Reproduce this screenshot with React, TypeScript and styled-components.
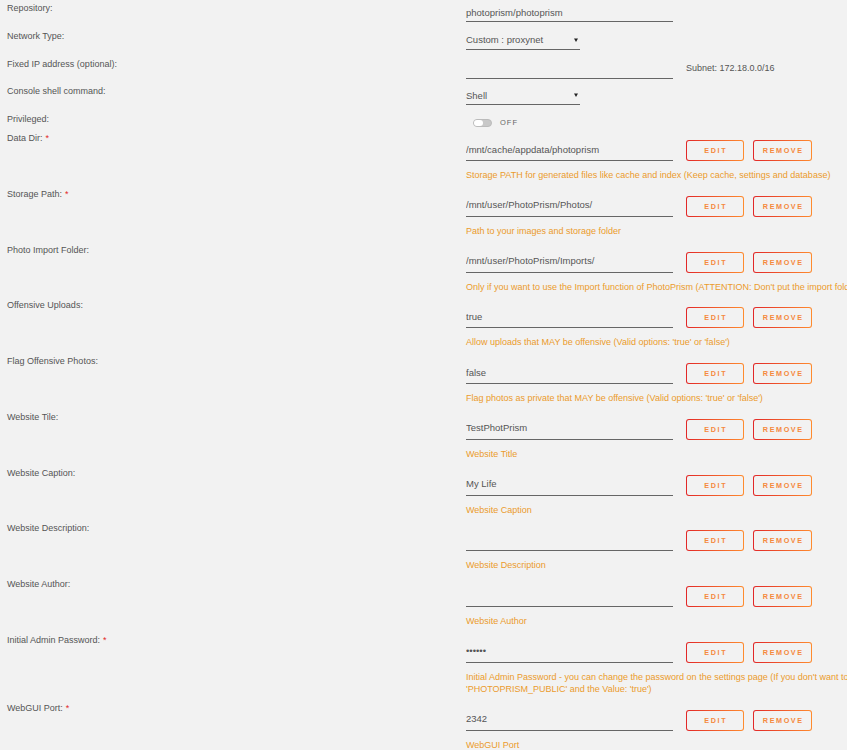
import React from 'react';
import styled, { createGlobalStyle } from 'styled-components';

const GlobalStyle = createGlobalStyle`
  html, body {
    margin: 0;
    padding: 0;
    background: #f2f2f2;
    overflow: hidden;
  }
  body {
    font-family: "Liberation Sans", Arial, sans-serif;
    color: #555;
  }
`;

const Form = styled.div`
  padding: 1px 0 0 7px;
`;

const Row = styled.div<{ $h: number }>`
  display: grid;
  grid-template-columns: 459px auto;
  height: ${(p) => p.$h}px;
`;

const ConfigRow = styled.div`
  display: grid;
  grid-template-columns: 459px auto;
  padding-bottom: 5.75px;
`;

const Label = styled.div`
  font-size: 9px;
  line-height: 14px;
  color: #555;
  white-space: nowrap;
`;

const Required = styled.span`
  color: #e22828;
  margin-left: 3px;
`;

const Value = styled.div`
  display: flex;
  align-items: flex-start;
  padding-top: 4px;
  align-self: start;
`;

const TextInput = styled.input<{ $w: number; $h?: number }>`
  box-sizing: content-box;
  width: ${(p) => p.$w}px;
  height: ${(p) => p.$h ?? 14}px;
  padding: 0 0 2px;
  margin: 0;
  border: 0;
  border-bottom: 1px solid #666;
  background: transparent;
  font: 9.5px "Liberation Sans", Arial, sans-serif;
  color: #555;
  outline: none;
`;

const Select = styled.div`
  box-sizing: content-box;
  width: 114px;
  height: 14px;
  padding-bottom: 2px;
  display: flex;
  align-items: center;
  justify-content: space-between;
  border-bottom: 1px solid #666;
  font-size: 9.5px;
  color: #555;
`;

const Caret = () => (
  <svg width="4" height="4" viewBox="0 0 4 4" style={{ marginRight: 2 }}>
    <path d="M0 0.5h4L2 4z" fill="#222" />
  </svg>
);

const Note = styled.span`
  margin-left: 13px;
  font-size: 9px;
  line-height: 14px;
  color: #555;
`;

const Switch = styled.div`
  display: flex;
  align-items: center;
  gap: 8px;
  margin-left: 7px;
  padding-top: 2px;
`;

const Track = styled.div`
  box-sizing: border-box;
  width: 19px;
  height: 8px;
  border-radius: 4px;
  background: #c8c8c8;
  border: 1px solid #bbb;
  display: flex;
  align-items: center;
`;

const Knob = styled.div`
  width: 9px;
  height: 6px;
  border-radius: 3px;
  background: #fff;
`;

const SwitchText = styled.span`
  font-size: 7.5px;
  letter-spacing: 1px;
  color: #666;
`;

const ConfigValue = styled.div`
  padding-top: 9px;
`;

const Controls = styled.div`
  display: flex;
  align-items: flex-end;
`;

const Button = styled.button<{ $w: number; $gap: number }>`
  box-sizing: border-box;
  width: ${(p) => p.$w}px;
  height: 21px;
  margin: 0 0 0 ${(p) => p.$gap}px;
  padding: 0 0 0 1.5px;
  border: 1.5px solid transparent;
  border-radius: 3px;
  background: linear-gradient(#f2f2f2, #f2f2f2) padding-box,
    linear-gradient(90deg, #e22828, #ff8c2f) border-box;
  font: bold 7.2px "Liberation Sans", Arial, sans-serif;
  letter-spacing: 1.6px;
  color: #f5893d;
  cursor: pointer;
`;

const Hint = styled.div`
  margin-top: 8px;
  font-size: 9px;
  line-height: 12px;
  color: #eb9b2c;
  white-space: nowrap;
`;

type Config = {
  label: string;
  value: string;
  hint: React.ReactNode;
  required?: boolean;
  secret?: boolean;
};

const configs: Config[] = [
  {
    label: 'Data Dir:',
    value: '/mnt/cache/appdata/photoprism',
    hint: 'Storage PATH for generated files like cache and index (Keep cache, settings and database)',
    required: true,
  },
  {
    label: 'Storage Path:',
    value: '/mnt/user/PhotoPrism/Photos/',
    hint: 'Path to your images and storage folder',
    required: true,
  },
  {
    label: 'Photo Import Folder:',
    value: '/mnt/user/PhotoPrism/Imports/',
    hint: "Only if you want to use the Import function of PhotoPrism (ATTENTION: Don't put the import folder inside the storage path)",
  },
  {
    label: 'Offensive Uploads:',
    value: 'true',
    hint: "Allow uploads that MAY be offensive (Valid options: 'true' or 'false')",
  },
  {
    label: 'Flag Offensive Photos:',
    value: 'false',
    hint: "Flag photos as private that MAY be offensive (Valid options: 'true' or 'false')",
  },
  { label: 'Website Tile:', value: 'TestPhotPrism', hint: 'Website Title' },
  { label: 'Website Caption:', value: 'My Life', hint: 'Website Caption' },
  { label: 'Website Description:', value: '', hint: 'Website Description' },
  { label: 'Website Author:', value: '', hint: 'Website Author' },
  {
    label: 'Initial Admin Password:',
    value: 'secret',
    secret: true,
    required: true,
    hint: (
      <>
        Initial Admin Password - you can change the password on the settings page (If you don't
        want to use a password, add a variable with the Key:
        <br />
        'PHOTOPRISM_PUBLIC' and the Value: 'true')
      </>
    ),
  },
  { label: 'WebGUI Port:', value: '2342', hint: 'WebGUI Port', required: true },
];

function ConfigField({ c }: { c: Config }) {
  return (
    <ConfigRow>
      <Label>
        {c.label}
        {c.required && <Required>*</Required>}
      </Label>
      <ConfigValue>
        <Controls>
          <TextInput
            $w={207}
            $h={18}
            type={c.secret ? 'password' : 'text'}
            defaultValue={c.value}
            readOnly
          />
          <Button $w={58} $gap={13}>EDIT</Button>
          <Button $w={59} $gap={9}>REMOVE</Button>
        </Controls>
        <Hint>{c.hint}</Hint>
      </ConfigValue>
    </ConfigRow>
  );
}

export default function App() {
  return (
    <>
      <GlobalStyle />
      <Form>
        <Row $h={27.75}>
          <Label>Repository:</Label>
          <Value>
            <TextInput $w={207} defaultValue="photoprism/photoprism" readOnly />
          </Value>
        </Row>
        <Row $h={27.75}>
          <Label>Network Type:</Label>
          <Value>
            <Select>
              Custom : proxynet
              <Caret />
            </Select>
          </Value>
        </Row>
        <Row $h={27.75}>
          <Label>Fixed IP address (optional):</Label>
          <Value>
            <TextInput $w={207} $h={15} defaultValue="" readOnly />
            <Note>Subnet: 172.18.0.0/16</Note>
          </Value>
        </Row>
        <Row $h={27.75}>
          <Label>Console shell command:</Label>
          <Value>
            <Select>
              Shell
              <Caret />
            </Select>
          </Value>
        </Row>
        <Row $h={19}>
          <Label>Privileged:</Label>
          <Switch>
            <Track>
              <Knob />
            </Track>
            <SwitchText>OFF</SwitchText>
          </Switch>
        </Row>
        {configs.map((c) => (
          <ConfigField key={c.label} c={c} />
        ))}
      </Form>
    </>
  );
}
